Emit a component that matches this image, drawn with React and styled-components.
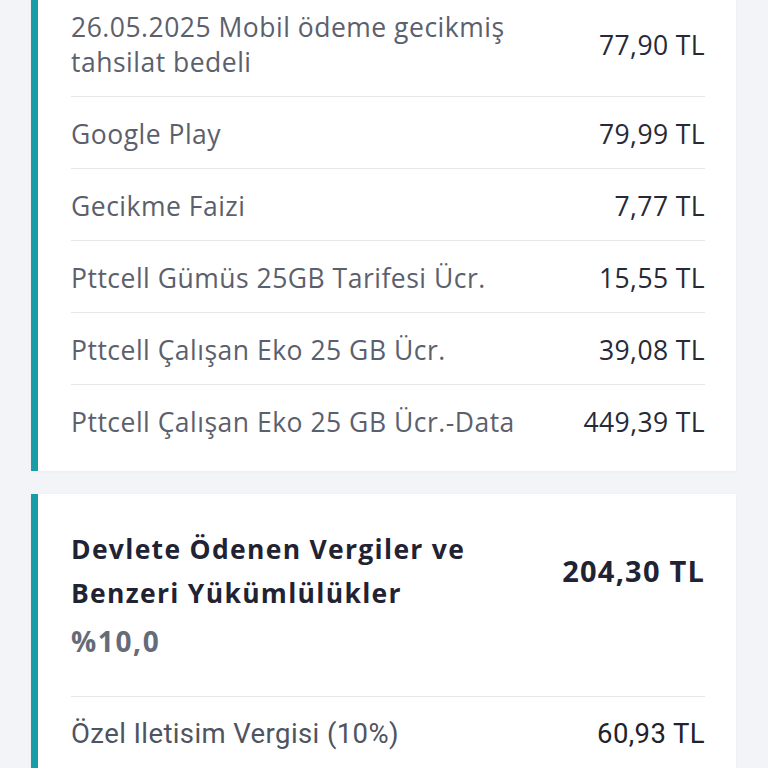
import React from "react";
import styled, { createGlobalStyle } from "styled-components";

const GlobalStyle = createGlobalStyle`
  html, body {
    margin: 0;
    padding: 0;
    background: #f3f4f7;
    font-family: "Open Sans", "Noto Sans", sans-serif;
    -webkit-font-smoothing: antialiased;
  }
`;

const Page = styled.div`
  width: 768px;
  height: 768px;
  overflow: hidden;
  box-sizing: border-box;
  padding: 0 32px 0 31px;
  display: flex;
  flex-direction: column;
  gap: 23px;
`;

const Card = styled.section`
  background: #ffffff;
  border-left: 7px solid #1a9ca7;
  padding: ${(p) => p.$padding || "0 31px 15px 33px"};
  margin-top: ${(p) => p.$offset || "0"};
  box-shadow: 0 1px 3px rgba(20, 30, 60, 0.04);
`;

const Row = styled.div`
  display: flex;
  align-items: center;
  justify-content: space-between;
  gap: 20px;
  padding: 20px 0 16px;
  min-height: 35px;
  border-top: ${(p) => (p.$first ? "none" : "1.5px solid #e6e7eb")};
`;

const Label = styled.span`
  font-size: 26.5px;
  line-height: 35px;
  letter-spacing: 0.5px;
  color: #5b606c;
  max-width: ${(p) => (p.$wide ? "none" : "450px")};
`;

const Amount = styled.span`
  font-size: 26.5px;
  line-height: 35px;
  letter-spacing: 0.4px;
  font-weight: 500;
  color: #272a36;
  white-space: nowrap;
`;

const Header = styled.div`
  padding: 33px 0 33px;
`;

const HeaderTop = styled.div`
  display: flex;
  align-items: center;
  justify-content: space-between;
`;

const Title = styled.h2`
  margin: 0;
  font-size: 26.5px;
  line-height: 44px;
  letter-spacing: 1.3px;
  font-weight: 700;
  color: #1f2334;
  max-width: 420px;
`;

const BigAmount = styled.span`
  font-size: 29px;
  line-height: 40px;
  letter-spacing: 1.2px;
  font-weight: 700;
  color: #1f2334;
  white-space: nowrap;
`;

const Rate = styled.div`
  margin-top: 4px;
  font-size: 28px;
  line-height: 44px;
  letter-spacing: 1.6px;
  font-weight: 700;
  color: #666b78;
`;

const TaxRow = styled(Row)`
  padding: 19px 0 17px;
  border-top: 1.5px solid #e6e7eb;
  border-bottom: 1.5px solid #e6e7eb;
`;

const TaxLabel = styled.span`
  font-family: "Roboto", "Liberation Sans Narrow", sans-serif;
  font-size: 27.5px;
  line-height: 35px;
  letter-spacing: 0.4px;
  color: #4f5461;
`;

const TaxAmount = styled(TaxLabel)`
  color: #20232e;
`;

const items = [
  { label: "26.05.2025 Mobil ödeme gecikmiş tahsilat bedeli", amount: "77,90 TL" },
  { label: "Google Play", amount: "79,99 TL" },
  { label: "Gecikme Faizi", amount: "7,77 TL" },
  { label: "Pttcell Gümüs 25GB Tarifesi Ücr.", amount: "15,55 TL" },
  { label: "Pttcell Çalışan Eko 25 GB Ücr.", amount: "39,08 TL" },
  { label: "Pttcell Çalışan Eko 25 GB Ücr.-Data", amount: "449,39 TL" },
];

export default function App() {
  return (
    <>
      <GlobalStyle />
      <Page>
        <Card $offset="-10px">
          {items.map((it, i) => (
            <Row key={it.label} $first={i === 0}>
              <Label $wide={i === items.length - 1}>{it.label}</Label>
              <Amount>{it.amount}</Amount>
            </Row>
          ))}
        </Card>
        <Card $padding="0 31px 0 33px">
          <Header>
            <HeaderTop>
              <Title>Devlete Ödenen Vergiler ve Benzeri Yükümlülükler</Title>
              <BigAmount>204,30 TL</BigAmount>
            </HeaderTop>
            <Rate>%10,0</Rate>
          </Header>
          <TaxRow>
            <TaxLabel>Özel Iletisim Vergisi (10%)</TaxLabel>
            <TaxAmount>60,93 TL</TaxAmount>
          </TaxRow>
        </Card>
      </Page>
    </>
  );
}
